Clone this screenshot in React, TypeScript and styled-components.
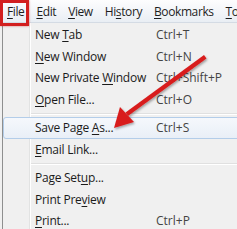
import React from "react";
import styled, { createGlobalStyle } from "styled-components";

const GlobalStyle = createGlobalStyle`
  html, body {
    margin: 0;
    padding: 0;
    background: #f0f0f0;
    overflow: hidden;
  }
  body {
    font-family: "Open Sans", "Noto Sans", sans-serif;
  }
`;

const Screen = styled.div`
  position: relative;
  width: 237px;
  height: 229px;
  overflow: hidden;
  background: #f0f0f0;
`;

const MenuBar = styled.div`
  display: flex;
  align-items: center;
  height: 22px;
  padding-left: 1px;
  background: linear-gradient(#fdfdfe, #e9eef4);
  border-bottom: 1px solid #d4dbe4;
  white-space: nowrap;
`;

const BarItem = styled.span`
  padding: 0 6px;
  font-size: 12px;
  color: #1e1e1e;
  letter-spacing: -0.4px;
`;

const Key = styled.u`
  text-decoration-thickness: 1px;
  text-underline-offset: 2px;
`;

const Menu = styled.div`
  position: relative;
  margin-left: 2px;
  padding-top: 1px;
  border-left: 1px solid #8e8f8f;
  background: #f0f0f0;
  height: 206px;
`;

const Gutter = styled.div`
  position: absolute;
  left: 26px;
  top: 0;
  bottom: 0;
  width: 1px;
  background: #e2e3e3;
  border-right: 1px solid #ffffff;
`;

const Row = styled.div<{ $active?: boolean }>`
  position: relative;
  display: grid;
  grid-template-columns: 120px 1fr;
  align-items: center;
  height: 21.5px;
  padding-left: 31px;
  margin-right: -4px;
  font-size: 12px;
  letter-spacing: -0.25px;
  color: #1b1b1b;
  white-space: nowrap;
  border: 1px solid ${(p) => (p.$active ? "#b3cde9" : "transparent")};
  border-radius: 3px;
  box-sizing: border-box;
  background: ${(p) =>
    p.$active ? "linear-gradient(#f5f8fc, #e9eff7)" : "transparent"};
`;

const Shortcut = styled.span`
  color: #444;
  padding-left: 1px;
  letter-spacing: 0;
`;

const Separator = styled.div`
  height: 7px;
  display: flex;
  align-items: center;
  padding-left: 27px;
  &::after {
    content: "";
    flex: 1;
    height: 1px;
    background: #e0e0e0;
    border-bottom: 1px solid #ffffff;
  }
`;

const FileHighlight = styled.div`
  position: absolute;
  left: 0;
  top: 0;
  width: 23px;
  height: 20px;
  border: 3px solid #d21f1f;
  box-shadow: 0 0 2px rgba(200, 30, 30, 0.6);
  pointer-events: none;
`;

const ArrowLayer = styled.svg`
  position: absolute;
  left: 0;
  top: 0;
  pointer-events: none;
`;

type Item = {
  label: React.ReactNode;
  shortcut?: string;
  active?: boolean;
};

const groups: Item[][] = [
  [
    { label: <>New <Key>T</Key>ab</>, shortcut: "Ctrl+T" },
    { label: <><Key>N</Key>ew Window</>, shortcut: "Ctrl+N" },
    { label: <>New Private <Key>W</Key>indow</>, shortcut: "Ctrl+Shift+P" },
    { label: <><Key>O</Key>pen File...</>, shortcut: "Ctrl+O" },
  ],
  [
    { label: <>Save Page <Key>A</Key>s...</>, shortcut: "Ctrl+S", active: true },
    { label: <><Key>E</Key>mail Link...</> },
  ],
  [
    { label: <>Page Set<Key>u</Key>p...</> },
    { label: <>Print Pre<Key>v</Key>iew</> },
    { label: <><Key>P</Key>rint...</>, shortcut: "Ctrl+P" },
  ],
];

export default function App() {
  return (
    <Screen>
      <GlobalStyle />
      <MenuBar>
        <BarItem><Key>F</Key>ile</BarItem>
        <BarItem><Key>E</Key>dit</BarItem>
        <BarItem><Key>V</Key>iew</BarItem>
        <BarItem>Hi<Key>s</Key>tory</BarItem>
        <BarItem><Key>B</Key>ookmarks</BarItem>
        <BarItem><Key>T</Key>ools</BarItem>
      </MenuBar>
      <Menu>
        <Gutter />
        {groups.map((g, gi) => (
          <React.Fragment key={gi}>
            {gi > 0 && <Separator />}
            {g.map((it, i) => (
              <Row key={i} $active={it.active}>
                <span>{it.label}</span>
                <Shortcut>{it.shortcut}</Shortcut>
              </Row>
            ))}
          </React.Fragment>
        ))}
      </Menu>
      <FileHighlight />
      <ArrowLayer width="237" height="229" viewBox="0 0 237 229">
        <defs>
          <filter id="sh" x="-20%" y="-20%" width="140%" height="140%">
            <feDropShadow dx="1" dy="1.5" stdDeviation="1" floodColor="#000" floodOpacity="0.35" />
          </filter>
        </defs>
        <g filter="url(#sh)" fill="#d81e1e" stroke="none">
          <path d="M204 55 L206.5 58.5 L128 116 L125.5 112.5 Z" />
          <path d="M114 128 L120 107 L134 122 Z" />
        </g>
      </ArrowLayer>
    </Screen>
  );
}
